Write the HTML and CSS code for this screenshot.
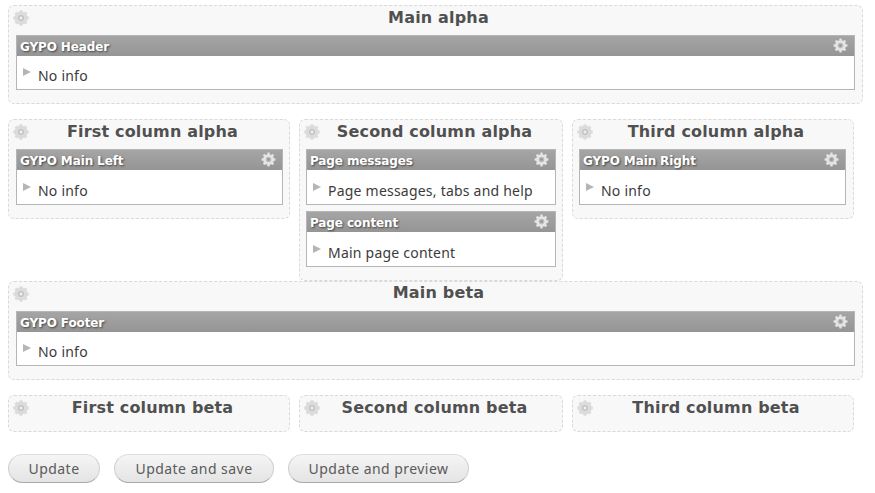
FILE: index.html
```
<!DOCTYPE html>
<html lang="en">
<head>
<meta charset="utf-8">
<title>Panel layout</title>
<link rel="stylesheet" href="styles.css">
</head>
<body>
<svg class="defs" width="0" height="0" aria-hidden="true">
  <defs>
    <symbol id="gear" viewBox="0 0 16 16">
      <g fill="currentColor"><circle cx="8" cy="8" r="6.1"/>
      <g id="teeth"><path d="M6.200 3 6.800.5h2.400L9.800 3zM6.200 13 6.800 15.500h2.400L9.800 13zM3 6.200.5 6.800v2.400l2.500.6zM13 6.200l2.500.6v2.400l-2.500.6z"/></g>
      <use href="#teeth" transform="rotate(45 8 8)"/></g>
      <circle class="ring" cx="8" cy="8" r="3"/>
      <circle class="hub" cx="8" cy="8" r="1.700"/>
    </symbol>
    <symbol id="cog" viewBox="0 0 16 16">
      <g fill="currentColor"><circle cx="8" cy="8" r="5.700"/>
      <g id="cogteeth"><path d="M6.400 3 7 .6h2L9.600 3zM6.400 13 7 15.400h2L9.600 13zM3 6.400.6 7v2l2.400.6zM13 6.400l2.400.6v2l-2.400.6z"/></g>
      <use href="#cogteeth" transform="rotate(45 8 8)"/></g>
      <circle class="ring" cx="8" cy="8" r="3"/>
      <circle class="core" cx="8" cy="8" r="1.500"/>
    </symbol>
  </defs>
</svg>
<form class="layout">
  <section class="region wide">
    <h2><svg class="gear"><use href="#gear"/></svg><span>Main alpha</span></h2>
    <article class="pane"><h3><span>GYPO Header</span><svg class="cog"><use href="#cog"/></svg></h3><p><i></i><span>No info</span></p></article>
  </section>
  <div class="columns alpha">
    <section class="region first">
      <h2><svg class="gear"><use href="#gear"/></svg><span>First column alpha</span></h2>
      <article class="pane"><h3><span>GYPO Main Left</span><svg class="cog"><use href="#cog"/></svg></h3><p><i></i><span>No info</span></p></article>
    </section>
    <section class="region second">
      <h2><svg class="gear"><use href="#gear"/></svg><span>Second column alpha</span></h2>
      <article class="pane"><h3><span>Page messages</span><svg class="cog"><use href="#cog"/></svg></h3><p><i></i><span>Page messages, tabs and help</span></p></article>
      <article class="pane"><h3><span>Page content</span><svg class="cog"><use href="#cog"/></svg></h3><p><i></i><span>Main page content</span></p></article>
    </section>
    <section class="region third">
      <h2><svg class="gear"><use href="#gear"/></svg><span>Third column alpha</span></h2>
      <article class="pane"><h3><span>GYPO Main Right</span><svg class="cog"><use href="#cog"/></svg></h3><p><i></i><span>No info</span></p></article>
    </section>
  </div>
  <section class="region wide last">
    <h2><svg class="gear"><use href="#gear"/></svg><span>Main beta</span></h2>
    <article class="pane"><h3><span>GYPO Footer</span><svg class="cog"><use href="#cog"/></svg></h3><p><i></i><span>No info</span></p></article>
  </section>
  <div class="columns beta">
    <section class="region first"><h2><svg class="gear"><use href="#gear"/></svg><span>First column beta</span></h2></section>
    <section class="region second"><h2><svg class="gear"><use href="#gear"/></svg><span>Second column beta</span></h2></section>
    <section class="region third"><h2><svg class="gear"><use href="#gear"/></svg><span>Third column beta</span></h2></section>
  </div>
  <div class="actions">
    <button type="button" class="update">Update</button>
    <button type="button" class="save">Update and save</button>
    <button type="button" class="preview">Update and preview</button>
  </div>
</form>
</body>
</html>
```
FILE: styles.css
```
* { box-sizing: border-box; }
body { margin: 0; background: #fff; color: #3b3b3b; font-family: "Noto Sans", "Open Sans", sans-serif; overflow: hidden; }
.defs { display: block; }
.layout { padding: 5px 0 0 8px; }
.region { border: 1px dashed #d9d9d9; border-radius: 6px; background: #f8f8f8; padding: 0 7px; }
.wide { width: 855px; height: 99px; }
.columns { display: grid; grid-template-columns: 282px 264px 282px; column-gap: 9px; align-items: start; }
.alpha { margin-top: 15px; height: 162px; }
.alpha .region { height: 100px; }
.alpha .second { height: 162px; }
.beta { margin-top: 15px; }
.beta .region { height: 37px; }
.first { padding-right: 6px; }
.second, .third { padding-left: 6px; }
.second { padding-right: 6px; }
h2 { display: flex; margin: 0; height: 29px; font-family: "DejaVu Sans", sans-serif; font-size: 16px; line-height: 23px; font-weight: 700; letter-spacing: .17px; color: #505050; white-space: nowrap; }
h2 span { flex: 1; text-align: center; margin-right: 7px; }
.last h2 { line-height: 21px; }
.third h2 span { margin-right: 7px; }
.gear { width: 16px; height: 16px; margin: 4px 0 0 -3px; color: #dedede; stroke: #cecece; stroke-width: .3; flex: none; }
.second .gear, .third .gear { margin-left: -2px; }
.ring { fill: #bdbdbd; }
.hub { fill: #eee; }
.pane { height: 56px; border: 1px solid #b5b5b5; background: #fff; }
.wide .pane { height: 55px; }
.pane + .pane { margin-top: 6px; }
h3 { display: flex; align-items: center; justify-content: space-between; margin: 0; padding: 0 6px 0 3px; height: 20px; background: linear-gradient(#a5a5a5, #959595); color: #fff; font-family: "DejaVu Sans", sans-serif; font-size: 12px; line-height: 20px; font-weight: 700; letter-spacing: -.12px; text-shadow: 1px 1px 2px #444; white-space: nowrap; }
h3 span { padding-top: 2px; }
.cog { width: 15px; height: 15px; color: #e6e6e6; margin-top: -1px; }
.cog .ring { fill: #b5b5b5; }
.core { fill: #999; }
p { display: flex; margin: 0; padding: 11px 0 0 7px; height: 34px; font-size: 14px; line-height: 20px; letter-spacing: .22px; white-space: nowrap; }
.wide p { padding-top: 10px; }
p i { width: 0; height: 0; border-left: 8px solid #b5b5b5; border-top: 4px solid transparent; border-bottom: 4px solid transparent; margin: 2px 7px 0 -1px; }
.actions { display: flex; gap: 14px; margin-top: 22px; }
button { height: 29px; padding: 0; border: 1px solid #cfcfcf; border-top-color: #dedede; border-bottom-color: #aaa; border-radius: 15px; background: linear-gradient(#f5f5f5, #e4e4e4); color: #5a5a5a; font: 14px/27px "Noto Sans", "Open Sans", sans-serif; letter-spacing: .45px; white-space: nowrap; }
.update { width: 92px; }
.save { width: 160px; }
.preview { width: 181px; }
```
